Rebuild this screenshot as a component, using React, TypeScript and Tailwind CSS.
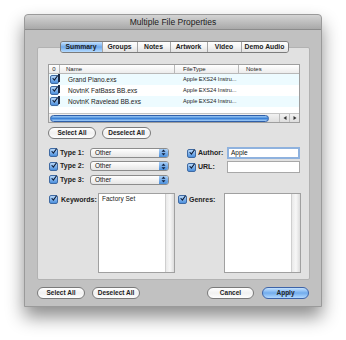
import React from "react";

const font = "font-['Liberation_Sans',Arial,sans-serif]";

function Check() {
  return (
    <span className="inline-flex w-[9px] h-[9px] shrink-0 rounded-[2px] border border-[#3f6aa3] bg-gradient-to-b from-[#b6d6f7] to-[#4b8fdc] items-center justify-center">
      <svg width="9" height="9" viewBox="0 0 9 9" className="-mt-[2px] ml-[1px]">
        <path d="M1.5 4.5 L3.6 7 L8 0.8" fill="none" stroke="#0d1b33" strokeWidth="1.6" strokeLinecap="round" />
      </svg>
    </span>
  );
}

function AquaButton({ label, w, blue }: { label: string; w: string; blue?: boolean }) {
  return (
    <div
      className={`${w} h-[12px] rounded-full border flex items-center justify-center text-[6.5px] font-bold text-[#222] ${
        blue
          ? "border-[#3d63a8] bg-gradient-to-b from-[#c4e2ff] via-[#72acec] to-[#b3d9ff]"
          : "border-[#7a7a7a] bg-gradient-to-b from-[#ffffff] via-[#f1f1f1] to-[#fdfdfd]"
      }`}
    >
      {label}
    </div>
  );
}

function PopUp() {
  return (
    <div className="w-[79px] h-[10px] rounded-[3px] border border-[#8c8c8c] bg-gradient-to-b from-white to-[#e6e6e6] flex items-center">
      <span className="flex-1 pl-[4px] text-[6.5px] text-[#111] leading-none">Other</span>
      <span className="w-[9px] h-full rounded-r-[2px] bg-gradient-to-b from-[#a8cff7] to-[#4a8fdc] flex flex-col items-center justify-center gap-[1px]">
        <svg width="5" height="7" viewBox="0 0 5 7">
          <path d="M0.5 2.8 L2.5 0.6 L4.5 2.8 Z M0.5 4.2 L2.5 6.4 L4.5 4.2 Z" fill="#10213f" />
        </svg>
      </span>
    </div>
  );
}

function TextArea({ text }: { text?: string }) {
  return (
    <div className="w-[77px] h-[80px] border border-[#a0a0a0] bg-white flex">
      <div className="flex-1 pl-[3px] pt-[2px] text-[6.5px] text-[#222] leading-none">{text}</div>
      <div className="w-[9px] h-full bg-gradient-to-r from-[#e9e9e9] via-[#f7f7f7] to-[#dcdcdc] border-l border-[#cfcfcf]" />
    </div>
  );
}

const rows = ["Grand Piano.exs", "NovtnK FatBass BB.exs", "NovtnK Ravelead BB.exs"];
const tabs = [
  { l: "Summary", w: "w-[41px]" },
  { l: "Groups", w: "w-[35px]" },
  { l: "Notes", w: "w-[33px]" },
  { l: "Artwork", w: "w-[37px]" },
  { l: "Video", w: "w-[34px]" },
  { l: "Demo Audio", w: "w-[47px]" },
];

export default function App() {
  return (
    <div className={`w-[346px] h-[340px] bg-white pt-[14px] pl-[24px] ${font}`}>
      <div className="w-[298px] h-[293px] bg-[#c1c1c1] border border-[#9a9a9a] rounded-t-[4px] shadow-[0_10px_18px_rgba(0,0,0,0.45)] flex flex-col">
        {/* title bar */}
        <div className="h-[15px] rounded-t-[4px] bg-gradient-to-b from-[#d4d4d4] to-[#a9a9a9] border-b border-[#8c8c8c] flex items-center justify-center text-[8.5px] text-[#1a1a1a]">
          Multiple File Properties
        </div>

        {/* tabs */}
        <div className="mt-[11px] flex justify-center relative z-10 -mb-[6px] pl-[2px]">
          <div className="flex h-[12px] rounded-[3px] border border-[#7b7b7b] overflow-hidden">
            {tabs.map((t, i) => (
              <div
                key={t.l}
                className={`${t.w} flex items-center justify-center text-[6.8px] font-bold text-[#1c1c1c] ${
                  i === 0
                    ? "bg-gradient-to-b from-[#c4e2ff] via-[#6fa9eb] to-[#b5dbff]"
                    : "bg-gradient-to-b from-white via-[#f3f3f3] to-[#e2e2e2] border-l border-[#a5a5a5]"
                }`}
              >
                {t.l}
              </div>
            ))}
          </div>
        </div>

        {/* panel */}
        <div className="ml-[12px] w-[273px] h-[233px] bg-[#e1e1e1] border border-[#b2b2b2] rounded-[2px] flex flex-col pl-[10px]">
          {/* table */}
          <div className="mt-[16px] w-[252px] h-[59px] border border-[#9e9e9e] bg-white flex flex-col">
            <div className="h-[9px] flex text-[6px] text-[#222] bg-gradient-to-b from-white to-[#ececec] border-b border-[#b8b8b8] leading-none items-center">
              <div className="w-[11px] text-center border-r border-[#b8b8b8] h-full flex items-center justify-center">0</div>
              <div className="w-[115px] pl-[6px] border-r border-[#b8b8b8] h-full flex items-center">Name</div>
              <div className="w-[64px] pl-[8px] border-r border-[#b8b8b8] h-full flex items-center">FileType</div>
              <div className="flex-1 pl-[7px] h-full flex items-center">Notes</div>
            </div>
            {rows.map((r, i) => (
              <div key={r} className={`h-[11px] flex items-center text-[6.5px] text-[#222] ${i % 2 === 0 ? "bg-[#edfbff]" : "bg-white"}`}>
                <div className="w-[11px] flex items-center justify-center relative">
                  <Check />
                  <span className="absolute right-[0px] top-[-1px] w-[2px] h-[8px] bg-[#1c2a44]" />
                </div>
                <div className="w-[115px] pl-[8px] whitespace-nowrap">{r}</div>
                <div className="w-[64px] pl-[8px] text-[5.6px] whitespace-nowrap">Apple EXS24 Instru...</div>
              </div>
            ))}
            <div className="flex-1" />
            <div className="h-[9px] flex items-center bg-gradient-to-b from-[#f2f2f2] to-[#dedede] border-t border-[#c4c4c4]">
              <div className="ml-[1px] w-[220px] h-[7px] rounded-full border border-[#2f5fa8] bg-gradient-to-b from-[#9cc9f4] via-[#3c82d6] to-[#a5d0fa]" />
              <div className="w-[10px]" />
              <div className="w-[10px] h-full border-l border-[#bdbdbd] flex items-center justify-center">
                <svg width="4" height="4" viewBox="0 0 4 4"><path d="M3.5 0 L0.5 2 L3.5 4 Z" fill="#333" /></svg>
              </div>
              <div className="w-[10px] h-full border-l border-[#bdbdbd] flex items-center justify-center">
                <svg width="4" height="4" viewBox="0 0 4 4"><path d="M0.5 0 L3.5 2 L0.5 4 Z" fill="#333" /></svg>
              </div>
            </div>
          </div>

          {/* select buttons */}
          <div className="mt-[4px] flex gap-[6px]">
            <AquaButton label="Select All" w="w-[48px]" />
            <AquaButton label="Deselect All" w="w-[49px]" />
          </div>

          {/* types + author */}
          <div className="mt-[7px] flex">
            <div className="w-[139px] flex flex-col pl-[1px]">
              {["Type 1:", "Type 2:", "Type 3:"].map((t) => (
                <div key={t} className="h-[13.5px] flex items-center">
                  <Check />
                  <span className="ml-[2px] w-[30px] text-[7px] font-bold text-[#222]">{t}</span>
                  <PopUp />
                </div>
              ))}
            </div>
            <div className="flex flex-col gap-[2px] pt-[1px]">
              <div className="flex items-center h-[12px]">
                <Check />
                <span className="ml-[2px] w-[29px] text-[7px] font-bold text-[#222]">Author:</span>
                <div className="w-[73px] h-[12px] border-2 border-[#8fb2de] bg-white text-[6.5px] text-[#111] flex items-center pl-[2px]">Apple</div>
              </div>
              <div className="flex items-center h-[12px]">
                <Check />
                <span className="ml-[2px] w-[29px] text-[7px] font-bold text-[#222]">URL:</span>
                <div className="w-[73px] h-[12px] border border-[#a8a8a8] bg-white" />
              </div>
            </div>
          </div>

          {/* keywords + genres */}
          <div className="mt-[6px] flex">
            <div className="w-[130px] flex items-start">
              <div className="flex items-center mt-[2px] pl-[1px]">
                <Check />
                <span className="ml-[3px] w-[37px] text-[7px] font-bold text-[#222]">Keywords:</span>
              </div>
              <TextArea text="Factory Set" />
            </div>
            <div className="flex items-start">
              <div className="flex items-center mt-[2px]">
                <Check />
                <span className="ml-[2px] w-[35px] text-[7px] font-bold text-[#222]">Genres:</span>
              </div>
              <TextArea />
            </div>
          </div>
        </div>

        {/* bottom buttons */}
        <div className="mt-[7px] flex pl-[12px] pr-[12px]">
          <div className="flex gap-[7px]">
            <AquaButton label="Select All" w="w-[48px]" />
            <AquaButton label="Deselect All" w="w-[48px]" />
          </div>
          <div className="flex-1" />
          <div className="flex gap-[8px]">
            <AquaButton label="Cancel" w="w-[47px]" />
            <AquaButton label="Apply" w="w-[47px]" blue />
          </div>
        </div>
      </div>
    </div>
  );
}
